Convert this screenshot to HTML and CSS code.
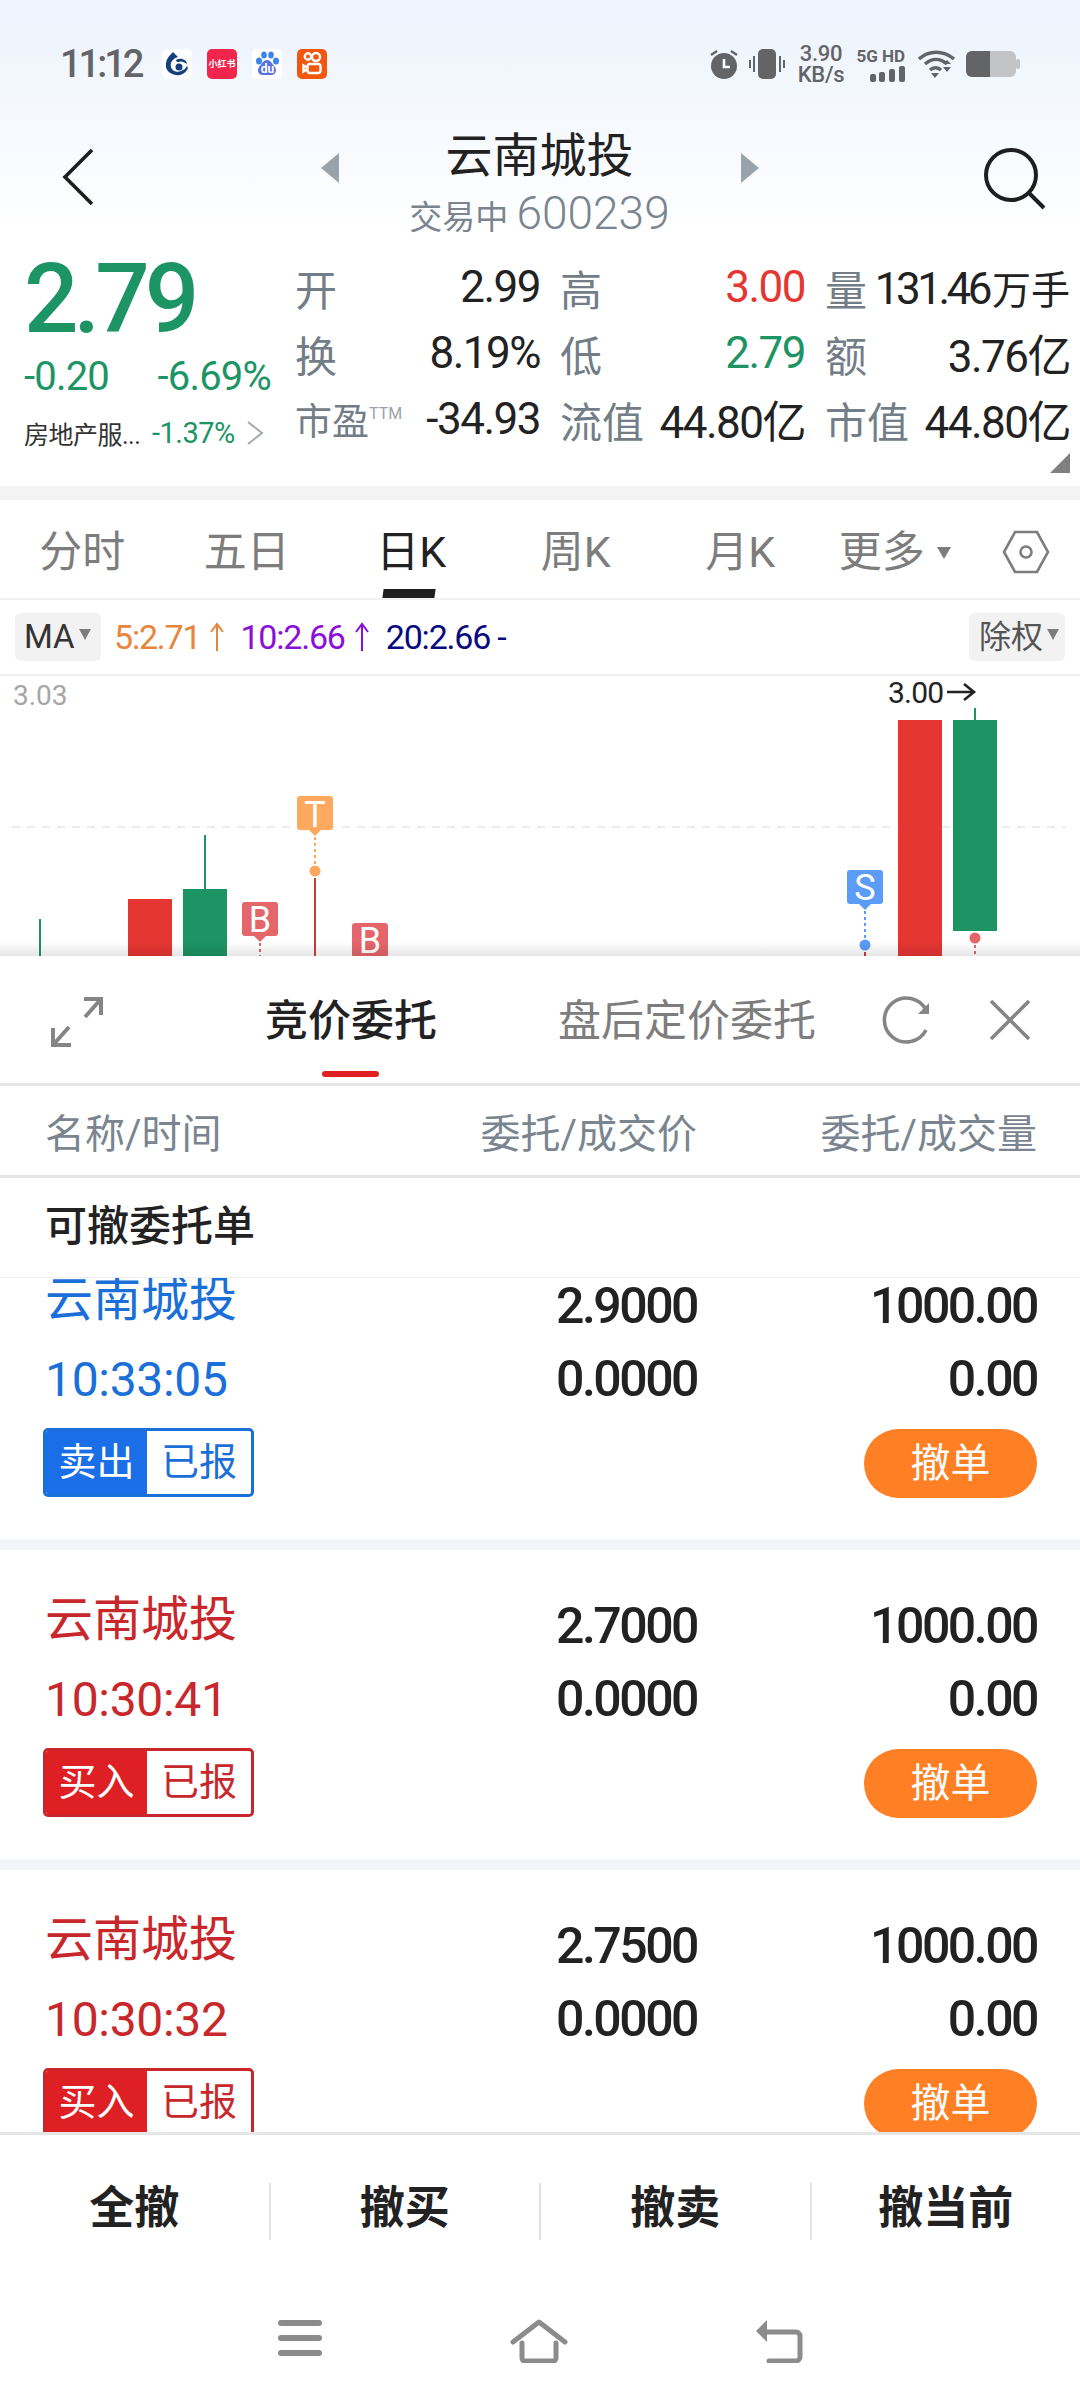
FILE: index.html
```html
<!doctype html>
<html>
<head>
<meta charset="utf-8">
<title>云南城投</title>
<link rel="stylesheet" href="styles.css">
</head>
<body>
<div id="page">

<div class="top">
	<div class="status">
		<div class="status-left">
			<span class="clock">11:12</span>
			<svg class="app" width="30" height="30" viewBox="0 0 30 30"><rect width="30" height="30" rx="5" fill="#fff"/><path d="M11 3l5 5c-6 2-8 6-7 10 1 4 6 6 10 4 3-1 5-3 6-5l1 2c-2 5-7 8-12 7-7-1-11-6-10-11 0-5 4-9 7-12z" fill="#14417e"/><path d="M14 11c5-3 11 0 11 4-3-2-6-3-8-2-2 .5-3-1-3-2z" fill="#14417e"/><circle cx="17" cy="18" r="3.500" fill="#14417e"/></svg>
			<span class="app app-red">小红书</span>
			<svg class="app" width="30" height="30" viewBox="0 0 30 30"><rect width="30" height="30" rx="5" fill="#fff"/><g fill="#3d83ee"><ellipse cx="7" cy="12" rx="3" ry="3.600"/><ellipse cx="12" cy="6" rx="2.800" ry="3.600"/><ellipse cx="19" cy="6" rx="2.800" ry="3.600"/><ellipse cx="24" cy="12" rx="3" ry="3.600"/></g><path d="M15 11c-4 0-5 4-8 7-2 3-1 8 4 8h8c5 0 6-5 4-8-3-3-4-7-8-7z" fill="#5a6fe0"/><text x="15.500" y="24" class="app-du">du</text></svg>
			<svg class="app" width="30" height="30" viewBox="0 0 30 30"><rect width="30" height="30" rx="5" fill="#f2570f"/><g fill="none" stroke="#fff" stroke-width="2.400"><circle cx="11" cy="7.500" r="3.200"/><circle cx="19" cy="8" r="4"/><rect x="10.500" y="15" width="13" height="9" rx="2.500"/><path d="M10.500 19l-4-2.500v6l4-2.500"/></g></svg>
		</div>
		<div class="status-right">
			<svg width="30" height="30" viewBox="0 0 30 30"><circle cx="15" cy="17" r="13" fill="#636467"/><path d="M15 10v8h6" fill="none" stroke="#fff" stroke-width="2.600"/><path d="M2 6l6-4M28 6l-6-4" stroke="#636467" stroke-width="2.400"/></svg>
			<svg class="ic-vib" width="36" height="30" viewBox="0 0 36 30"><rect x="9" y="0" width="18" height="30" rx="5" fill="#636467"/><path d="M1 11v8M5 7v16M31 7v16M35 11v8" stroke="#636467" stroke-width="2"/></svg>
			<div class="speed"><span>3.90</span><span>KB/s</span></div>
			<div class="net">
				<span>5G HD</span>
				<svg width="35" height="16" viewBox="0 0 35 16"><g fill="#636467"><rect x="0" y="8" width="6" height="8" rx="2"/><rect x="9" y="6" width="6" height="10" rx="2"/><rect x="19" y="3" width="6" height="13" rx="2"/><rect x="29" y="0" width="6" height="16" rx="2"/></g></svg>
			</div>
			<svg width="37" height="28" viewBox="0 0 37 28"><g fill="none" stroke="#636467" stroke-width="3.400"><path d="M1 9c10-9 24-9 35 0"/><path d="M7 14c7-6 15-6 22 0"/><path d="M12 20c3-3 8-3 11 0"/></g><path d="M13 23h8l-4 5zM25 14l4-4 4 4zM25 17h8l-4 5z" fill="#636467"/></svg>
			<svg width="54" height="28" viewBox="0 0 54 28"><rect x="0" y="1" width="50" height="26" rx="6" fill="#c1c3c7"/><path d="M6 1h18v26H6a6 6 0 0 1-6-6V7a6 6 0 0 1 6-6z" fill="#636467"/><rect x="50" y="9" width="4" height="10" rx="2" fill="#c1c3c7"/></svg>
		</div>
	</div>
	<div class="titlebar">
		<svg width="32" height="58" viewBox="0 0 32 58"><path d="M30 2L3 29l27 27" fill="none" stroke="#1e1e1e" stroke-width="3.600"/></svg>
		<div class="title-mid">
			<span class="tri tri-l"></span>
			<div class="title-text">
				<div class="stock-name">云南城投</div>
				<div class="stock-sub">交易中 <b>600239</b></div>
			</div>
			<span class="tri tri-r"></span>
		</div>
		<svg width="64" height="62" viewBox="0 0 64 62"><circle cx="28" cy="27" r="25" fill="none" stroke="#1e1e1e" stroke-width="4"/><path d="M46 45l15 15" stroke="#1e1e1e" stroke-width="4"/></svg>
	</div>
</div>

<div class="quote">
	<div class="quote-left">
		<div class="price">2.79</div>
		<div class="change"><span>-0.20</span><span>-6.69%</span></div>
		<div class="sector">
			<span class="sector-name">房地产服...</span>
			<span class="sector-pct">-1.37%</span>
			<svg width="18" height="24" viewBox="0 0 18 24"><path d="M2 1l14 11L2 23" fill="none" stroke="#a3a9af" stroke-width="2"/></svg>
		</div>
	</div>
	<div class="quote-grid">
		<div class="cell"><span class="lbl">开</span><span class="val">2.99</span></div>
		<div class="cell"><span class="lbl">高</span><span class="val red">3.00</span></div>
		<div class="cell"><span class="lbl">量</span><span class="val val-tight">131.46<em>万手</em></span></div>
		<div class="cell"><span class="lbl">换</span><span class="val">8.19%</span></div>
		<div class="cell"><span class="lbl">低</span><span class="val green">2.79</span></div>
		<div class="cell"><span class="lbl">额</span><span class="val">3.76亿</span></div>
		<div class="cell"><span class="lbl lbl-small">市盈<sup>TTM</sup></span><span class="val">-34.93</span></div>
		<div class="cell"><span class="lbl">流值</span><span class="val">44.80亿</span></div>
		<div class="cell"><span class="lbl">市值</span><span class="val">44.80亿</span></div>
	</div>
	<span class="corner"></span>
</div>

<div class="tabs">
	<div class="tab">分时</div>
	<div class="tab">五日</div>
	<div class="tab on">日K</div>
	<div class="tab">周K</div>
	<div class="tab">月K</div>
	<div class="tab tab-more">更多<i class="caret"></i></div>
	<svg class="hex" width="48" height="44" viewBox="0 0 48 44"><path d="M13 2h22l11 20-11 20H13L2 22z" fill="none" stroke="#7d7d7d" stroke-width="2.600"/><circle cx="24" cy="22" r="5.500" fill="none" stroke="#7d7d7d" stroke-width="2.600"/></svg>
</div>

<div class="ma-row">
	<div class="chip">MA<i class="caret caret-s"></i></div>
	<span class="ma ma-5">5:2.71<svg class="up" width="14" height="30" viewBox="0 0 14 30"><path d="M7 2v27M1 10l6-8 6 8" fill="none" stroke="#e8853a" stroke-width="2"/></svg></span>
	<span class="ma ma-10">10:2.66<svg class="up" width="14" height="30" viewBox="0 0 14 30"><path d="M7 2v27M1 10l6-8 6 8" fill="none" stroke="#8a10d8" stroke-width="2"/></svg></span>
	<span class="ma ma-20">20:2.66 -</span>
	<div class="chip chip-r">除权<i class="caret caret-s"></i></div>
</div>

<div class="chart">
	<svg width="1080" height="280" viewBox="0 676 1080 280">
		<path d="M12 827H1066" stroke="#ececec" stroke-width="2" stroke-dasharray="8 7"/>
		<text x="13" y="705" class="axis">3.03</text>
		<text x="888" y="703" class="hi">3.00</text>
		<path d="M947 692h27M964 684l10 8-10 8" fill="none" stroke="#222" stroke-width="2.600"/>

		<path d="M40 919V956" stroke="#1c9464" stroke-width="2"/>
		<rect x="128" y="899" width="44" height="57" fill="#e53632"/>
		<path d="M205 835V889" stroke="#1c9464" stroke-width="2"/>
		<rect x="183" y="889" width="44" height="67" fill="#1c9464"/>
		<path d="M315 878V956" stroke="#cc3b3b" stroke-width="2"/>
		<rect x="898" y="720" width="44" height="236" fill="#e53632"/>
		<path d="M975 708V720" stroke="#1c9464" stroke-width="2"/>
		<rect x="953" y="720" width="44" height="211" fill="#1c9464"/>
		<path d="M865 952V956" stroke="#cc3b3b" stroke-width="2"/>

		<g class="flag">
			<rect x="242" y="902" width="36" height="34" rx="3" fill="#e4656a"/>
			<path d="M254 936h12l-6 6z" fill="#e4656a"/>
			<text x="260" y="932">B</text>
			<path d="M260 943V956" stroke="#e4656a" stroke-width="2" stroke-dasharray="3 3"/>
		</g>
		<g class="flag">
			<rect x="297" y="796" width="36" height="34" rx="3" fill="#ffa860"/>
			<path d="M309 830h12l-6 6z" fill="#ffa860"/>
			<text x="315" y="827">T</text>
			<path d="M315 837V864" stroke="#ffa860" stroke-width="2" stroke-dasharray="3 3"/>
			<circle cx="315" cy="871" r="5.500" fill="#ffa860"/>
		</g>
		<g class="flag">
			<rect x="352" y="923" width="36" height="34" rx="3" fill="#e4656a"/>
			<text x="370" y="953">B</text>
		</g>
		<g class="flag">
			<rect x="847" y="870" width="36" height="34" rx="3" fill="#5b9cf6"/>
			<path d="M859 904h12l-6 6z" fill="#5b9cf6"/>
			<text x="865" y="900">S</text>
			<path d="M865 911V938" stroke="#5b9cf6" stroke-width="2" stroke-dasharray="3 3"/>
			<circle cx="865" cy="945" r="5.500" fill="#5b9cf6"/>
		</g>
		<circle cx="975" cy="938" r="5.500" fill="#e4656a"/>
		<path d="M975 945V956" stroke="#e4656a" stroke-width="2" stroke-dasharray="3 3"/>
	</svg>
	<div class="chart-shade"></div>
</div>

<div class="panel-tabs">
	<svg class="expand" width="52" height="50" viewBox="0 0 52 50"><g fill="none" stroke="#858585" stroke-width="4"><path d="M33 2h17v16"/><path d="M50 2L34 20"/><path d="M2 31v17h18"/><path d="M2 48l16-18"/></g></svg>
	<div class="ptab ptab-on">竞价委托</div>
	<div class="ptab">盘后定价委托</div>
	<svg class="refresh" width="48" height="48" viewBox="0 0 48 48"><path d="M44 14A22 22 0 1 0 44 34" fill="none" stroke="#858585" stroke-width="3.600"/><path d="M36 18h11V7z" fill="#858585"/></svg>
	<svg class="close" width="42" height="42" viewBox="0 0 42 42"><path d="M2 2l38 38M40 2L2 40" stroke="#858585" stroke-width="3.600"/></svg>
</div>

<div class="list-head">
	<span class="lh-name">名称/时间</span>
	<span class="lh-price">委托/成交价</span>
	<span class="lh-qty">委托/成交量</span>
</div>

<div class="list-title">可撤委托单</div>

<div class="list">
	<div class="order order-first sell">
		<div class="o-left">
			<div class="o-name">云南城投</div>
			<div class="o-time">10:33:05</div>
			<div class="o-tag"><span>卖出</span><span>已报</span></div>
		</div>
		<div class="o-price"><div>2.9000</div><div>0.0000</div></div>
		<div class="o-qty"><div>1000.00</div><div>0.00</div><button class="btn-cancel">撤单</button></div>
	</div>
	<div class="order buy">
		<div class="o-left">
			<div class="o-name">云南城投</div>
			<div class="o-time">10:30:41</div>
			<div class="o-tag"><span>买入</span><span>已报</span></div>
		</div>
		<div class="o-price"><div>2.7000</div><div>0.0000</div></div>
		<div class="o-qty"><div>1000.00</div><div>0.00</div><button class="btn-cancel">撤单</button></div>
	</div>
	<div class="order buy">
		<div class="o-left">
			<div class="o-name">云南城投</div>
			<div class="o-time">10:30:32</div>
			<div class="o-tag"><span>买入</span><span>已报</span></div>
		</div>
		<div class="o-price"><div>2.7500</div><div>0.0000</div></div>
		<div class="o-qty"><div>1000.00</div><div>0.00</div><button class="btn-cancel">撤单</button></div>
	</div>
</div>

<div class="actions">
	<div class="act">全撤</div>
	<div class="act">撤买</div>
	<div class="act">撤卖</div>
	<div class="act">撤当前</div>
</div>

<div class="navbar">
	<svg width="46" height="38" viewBox="0 0 46 38"><path d="M4 4h38M4 19h38M4 34h38" stroke="#8c8c8c" stroke-width="6" stroke-linecap="round"/></svg>
	<svg width="58" height="44" viewBox="0 0 58 44"><path d="M3 23L29 3l26 20M12 24v15a3 3 0 0 0 3 3h28a3 3 0 0 0 3-3V24" fill="none" stroke="#8c8c8c" stroke-width="5" stroke-linecap="round" stroke-linejoin="round"/></svg>
	<svg width="50" height="44" viewBox="0 0 50 44"><path d="M12 13h30a4 4 0 0 1 4 4v21a4 4 0 0 1-4 4H15" fill="none" stroke="#8c8c8c" stroke-width="5" stroke-linecap="round"/><path d="M13 1v22L2 12z" fill="#8c8c8c"/></svg>
</div>

</div>
</body>
</html>
```

FILE: styles.css
```css
* {
	box-sizing: border-box;
}
html, body {
	margin: 0;
	padding: 0;
	background: #fff;
}
body {
	font-family: Roboto, "Noto Sans CJK SC", sans-serif;
	color: #222;
}
#page {
	width: 1080px;
	height: 2408px;
	display: flex;
	flex-direction: column;
	overflow: hidden;
}

/* status bar + title */
.top {
	height: 240px;
	background: linear-gradient(#edf3fd, #f6f9fe 130px, #fff 235px);
}
.status {
	height: 128px;
	display: flex;
	justify-content: space-between;
	align-items: flex-start;
	padding: 49px 60px 0 60px;
}
.status-left {
	display: flex;
	align-items: center;
	height: 30px;
}
.clock {
	font-size: 38px;
	font-weight: 500;
	color: #636467;
	letter-spacing: -3px;
	width: 102px;
}
.app {
	width: 30px;
	height: 30px;
	margin-right: 15px;
}
.app-red {
	background: #f2254c;
	border-radius: 5px;
	color: #fff;
	font-size: 9px;
	font-weight: 700;
	line-height: 30px;
	text-align: center;
	white-space: nowrap;
}
.app-du {
	fill: #fff;
	font-size: 12px;
	font-weight: 700;
	text-anchor: middle;
}
.status-right {
	display: flex;
	align-items: center;
	height: 30px;
}
.ic-vib {
	margin-left: 10px;
}
.speed {
	display: flex;
	flex-direction: column;
	align-items: center;
	width: 48px;
	margin-left: 12px;
	color: #636467;
	font-size: 22px;
	line-height: 21px;
	font-weight: 500;
	letter-spacing: -0.300px;
}
.net {
	display: flex;
	flex-direction: column;
	align-items: flex-end;
	width: 48px;
	margin-left: 12px;
	color: #636467;
	font-size: 17px;
	line-height: 20px;
	font-weight: 700;
	white-space: nowrap;
}
.status-right > svg:nth-last-child(2) {
	margin-left: 13px;
}
.status-right > svg:last-child {
	margin-left: 11px;
}
.titlebar {
	height: 112px;
	display: flex;
	justify-content: space-between;
	align-items: flex-start;
	padding: 0 33px 0 62px;
}
.titlebar > svg {
	margin-top: 20px;
}
.title-mid {
	display: flex;
	align-items: flex-start;
	margin-left: 2px;
}
.tri {
	width: 0;
	height: 0;
	margin-top: 25px;
	border-top: 15px solid transparent;
	border-bottom: 15px solid transparent;
}
.tri-l {
	border-right: 18px solid #9aa3ab;
}
.tri-r {
	border-left: 18px solid #9aa3ab;
}
.title-text {
	width: 402px;
	text-align: center;
}
.stock-name {
	font-size: 47px;
	line-height: 56px;
}
.stock-sub {
	font-size: 33px;
	line-height: 48px;
	margin-top: 5px;
	color: #7a8590;
}
.stock-sub b {
	font-size: 46px;
	font-weight: 300;
}

/* quote block */
.quote {
	position: relative;
	height: 246px;
	display: flex;
	background: #fff;
}
.quote-left {
	width: 295px;
	padding-left: 24px;
}
.price {
	font-size: 96px;
	font-weight: 500;
	line-height: 90px;
	margin-top: 14px;
	letter-spacing: -5px;
	color: #1c9464;
}
.change {
	display: flex;
	justify-content: space-between;
	width: 247px;
	font-size: 40px;
	line-height: 56px;
	margin-top: 5px;
	letter-spacing: -0.800px;
	color: #1c9464;
}
.sector {
	display: flex;
	align-items: center;
	height: 40px;
	margin-top: 8px;
	white-space: nowrap;
}
.sector-name {
	font-size: 25px;
	letter-spacing: -0.500px;
	width: 128px;
	color: #333;
}
.sector-pct {
	font-size: 29px;
	width: 94px;
	color: #1c9464;
	letter-spacing: -0.500px;
}
.quote-grid {
	display: grid;
	grid-template-columns: 245px 245px 245px;
	grid-auto-rows: 66px;
	column-gap: 20px;
	padding-top: 14px;
}
.cell {
	display: flex;
	justify-content: space-between;
	align-items: center;
	white-space: nowrap;
}
.lbl {
	font-size: 42px;
	color: #737d87;
}
.lbl-small {
	font-size: 37px;
	position: relative;
}
.lbl-small sup {
	font-size: 16px;
	vertical-align: 16px;
	line-height: 0;
	color: #9aa3ab;
}
.val {
	font-size: 44px;
	letter-spacing: -1.500px;
	color: #222;
}
.val-tight {
	letter-spacing: -3.500px;
}
.val-tight em {
	font-style: normal;
	font-size: 39px;
	letter-spacing: 0;
	margin-left: 3px;
}
.red {
	color: #e53632;
}
.green {
	color: #1c9464;
}
.corner {
	position: absolute;
	right: 10px;
	bottom: 13px;
	border-left: 20px solid transparent;
	border-bottom: 20px solid #808080;
}

/* period tabs */
.tabs {
	height: 114px;
	border-top: 14px solid #f3f3f3;
	border-bottom: 2px solid #f0f0f0;
	display: flex;
	align-items: flex-start;
	background: #fff;
}
.tab {
	width: 164.500px;
	height: 98px;
	text-align: center;
	font-size: 43px;
	color: #7d7d7d;
	white-space: nowrap;
	position: relative;
	line-height: 98px;
	padding-top: 3px;
}
.tab.on {
	color: #222;
}
.tab.on::after {
	content: "";
	position: absolute;
	left: 54px;
	bottom: 0;
	width: 52px;
	height: 9px;
	background: #1e1e1e;
	transform: skewX(-8deg);
}
.tab-more {
	margin-left: -10px;
}
.caret {
	display: inline-block;
	width: 0;
	height: 0;
	margin-left: 12px;
	vertical-align: 8px;
	border-left: 7px solid transparent;
	border-right: 7px solid transparent;
	border-top: 12px solid #7d7d7d;
}
.caret-s {
	margin-left: 4px;
	border-left-width: 6px;
	border-right-width: 6px;
	border-top-width: 11px;
}
.hex {
	margin: 30px 0 0 25px;
}

/* MA row */
.ma-row {
	height: 76px;
	display: flex;
	align-items: center;
	padding: 0 15px;
	border-bottom: 2px solid #f0f0f0;
	white-space: nowrap;
}
.chip {
	height: 48px;
	width: 86px;
	background: #f2f2f2;
	border-radius: 6px;
	font-size: 33px;
	line-height: 48px;
	padding-left: 9px;
	color: #333;
	margin-right: 13px;
}
.chip-r {
	width: 96px;
	margin-left: auto;
	margin-right: 0;
	color: #555;
	font-size: 32px;
	padding-left: 10px;
}
.ma {
	display: flex;
	align-items: center;
	font-size: 34px;
	letter-spacing: -1.200px;
}
.up {
	margin-left: 10px;
}
.ma-5 {
	color: #e8853a;
	margin-right: 16px;
}
.ma-10 {
	color: #8a10d8;
	margin-right: 17px;
}
.ma-20 {
	color: #0a0a80;
}

/* chart */
.chart {
	position: relative;
	height: 280px;
	flex-shrink: 0;
}
.chart svg {
	display: block;
}
.axis {
	font-size: 28px;
	fill: #a6a6a6;
}
.hi {
	font-size: 30px;
	letter-spacing: -0.800px;
	fill: #222;
}
.flag text {
	font-size: 36px;
	fill: #fff;
	text-anchor: middle;
}
.chart-shade {
	position: absolute;
	left: 0;
	right: 0;
	bottom: 0;
	height: 14px;
	background: linear-gradient(rgba(0, 0, 0, 0), rgba(0, 0, 0, 0.1));
}

/* order panel */
.panel-tabs {
	position: relative;
	height: 130px;
	border-bottom: 3px solid #e6e6e6;
	flex-shrink: 0;
}
.panel-tabs svg {
	position: absolute;
}
.expand {
	left: 51px;
	top: 41px;
}
.refresh {
	left: 882px;
	top: 40px;
}
.close {
	left: 989px;
	top: 43px;
}
.ptab {
	position: absolute;
	top: 35px;
	left: 558px;
	font-size: 43px;
	line-height: 60px;
	color: #7d7d7d;
	white-space: nowrap;
}
.ptab-on {
	left: 265px;
	color: #222;
	font-weight: 500;
}
.ptab-on::after {
	content: "";
	position: absolute;
	left: 57px;
	top: 80px;
	width: 57px;
	height: 6px;
	border-radius: 3px;
	background: #e02020;
}
.list-head {
	height: 92px;
	flex-shrink: 0;
	display: flex;
	align-items: center;
	padding: 0 43px 0 45px;
	border-bottom: 3px solid #e6e6e6;
	font-size: 40px;
	color: #7a8590;
	white-space: nowrap;
}
.lh-name {
	flex: 1;
}
.lh-qty {
	width: 340px;
	text-align: right;
}
.list-title {
	height: 100px;
	flex-shrink: 0;
	padding: 0 45px;
	border-bottom: 1px solid #eee;
	font-size: 42px;
	font-weight: 500;
	line-height: 98px;
}
.list {
	height: 854px;
	flex-shrink: 0;
	overflow: hidden;
}
.order {
	height: 320px;
	border-bottom: 11px solid #f4f5f9;
	display: flex;
	padding: 40px 43px 0 45px;
}
.order-first {
	margin-top: -48px;
}
.sell {
	color: #1a6fd8;
}
.buy {
	color: #c8272b;
}
.o-left {
	flex: 1;
}
.o-name {
	font-size: 48px;
	line-height: 60px;
}
.o-time {
	font-size: 48px;
	line-height: 60px;
	margin-top: 20px;
	letter-spacing: -0.300px;
}
.o-tag {
	display: flex;
	width: 211px;
	height: 69px;
	margin: 18px 0 0 -2px;
	border: 3px solid currentColor;
	border-radius: 5px;
	font-size: 38px;
	line-height: 63px;
	overflow: hidden;
}
.o-tag span {
	flex: 1;
	text-align: center;
}
.o-tag span:first-child {
	flex: 0 0 101px;
	color: #fff;
	background: #1a6fe8;
}
.buy .o-tag span:first-child {
	background: #de2024;
}
.o-price, .o-qty {
	padding-top: 6px;
	text-align: right;
	font-size: 50px;
	font-weight: 500;
	line-height: 60px;
	letter-spacing: -2.500px;
	color: #222;
}
.o-price div + div, .o-qty div + div {
	margin-top: 13px;
}
.o-qty {
	width: 340px;
}
.btn-cancel {
	display: block;
	margin: 20px 0 0 auto;
	width: 173px;
	height: 69px;
	border: 0;
	border-radius: 35px;
	background: #ff7f24;
	color: #fff;
	font-family: inherit;
	font-size: 40px;
	letter-spacing: 0;
	padding: 0 0 7px;
}
.actions {
	height: 158px;
	flex-shrink: 0;
	border-top: 3px solid #e6e6e6;
	display: flex;
	align-items: flex-start;
	padding-top: 48px;
}
.act {
	flex: 1;
	height: 57px;
	line-height: 52px;
	font-size: 45px;
	font-weight: 700;
	text-align: center;
	border-left: 2px solid #e2e2e2;
}
.act:first-child {
	border-left: 0;
}
.navbar {
	flex: 1;
	display: flex;
	align-items: flex-start;
	padding: 29px 0 0 277px;
}
.navbar svg:nth-child(2) {
	margin-left: 187px;
}
.navbar svg:nth-child(3) {
	margin-left: 186px;
}
```
